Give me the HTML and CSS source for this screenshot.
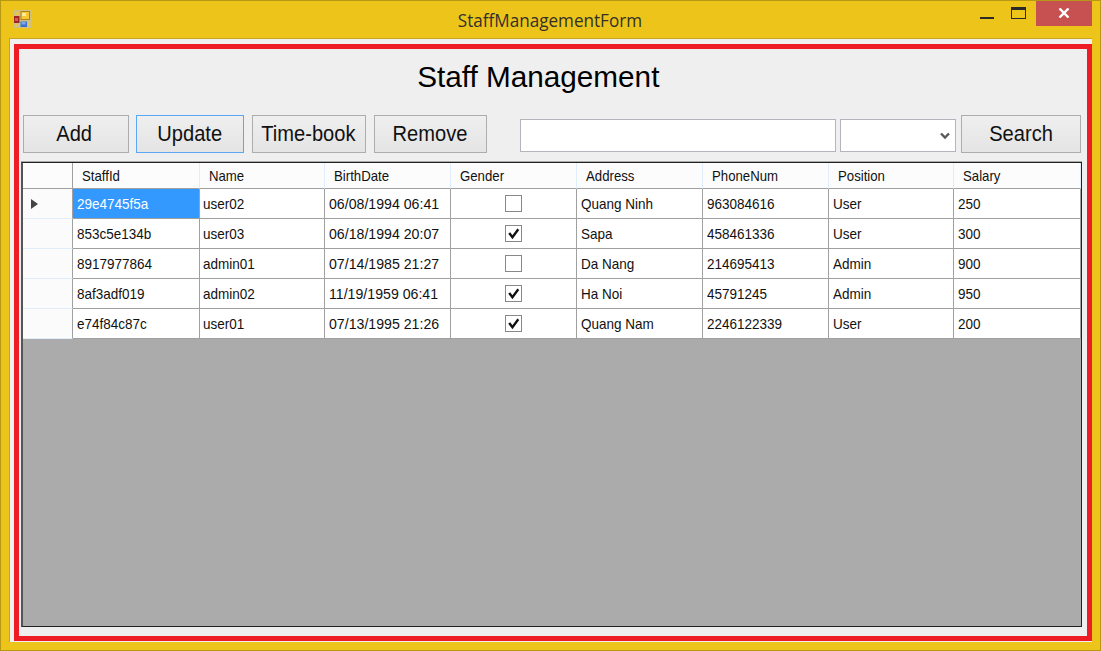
FILE: index.html
```html
<!DOCTYPE html>
<html lang="en">
<head>
<meta charset="utf-8">
<title>StaffManagementForm</title>
<link rel="stylesheet" href="styles.css">
</head>
<body>
<div class="window">
  <header class="titlebar">
    <svg class="app-icon" width="18" height="18" viewBox="0 0 18 18">
      <path fill="#cdbf86" d="M0 0h18v18H0z"/>
      <path fill="#e6c548" d="M2 2h4v3H2zM15 12h2v4h-2zM2 14h2v2H2z"/>
      <path fill="#b08316" d="M7.500 1H17v9H7.500z"/><path fill="#f8c832" d="M8.500 2H16v7H8.500z"/><path fill="#ffe99a" d="M9 3h4v3H9z"/>
      <path fill="#9f2525" d="M1 6h5.500v7H1z"/><path fill="#d55a55" d="M2 8h3v3H2z"/>
      <path fill="#3b70d2" d="M7.500 11.500H14V17H7.500z"/><path fill="#79a9f5" d="M8.500 12h4v2.500h-4z"/>
    </svg>
    <h1 class="title"><span>StaffManagementForm</span></h1>
    <div class="controls">
      <svg width="50" height="26" viewBox="0 0 50 26" shape-rendering="crispEdges">
        <path fill="#2b2a26" d="M0 16h14v2H0zM31 6h15v12H31z"/><path fill="#edc51a" d="M32 9h13v8H32z"/>
      </svg>
      <button class="close"><svg width="12" height="10" viewBox="0 0 12 10"><path d="M1.500.5l9 9M10.500.5l-9 9" stroke="#fff" stroke-width="2.400"/></svg></button>
    </div>
  </header>
  <main class="client">
    <section class="panel">
      <h2 class="heading"><span>Staff Management</span></h2>
      <div class="toolbar">
        <button class="btn add"><span>Add</span></button>
        <button class="btn update"><span>Update</span></button>
        <button class="btn timebook"><span>Time-book</span></button>
        <button class="btn remove"><span>Remove</span></button>
        <div class="field"></div>
        <div class="field combo"><svg width="10" height="8" viewBox="0 0 10 8"><path d="M1 1.500l4 4 4-4" fill="none" stroke="#55585c" stroke-width="2.400"/></svg></div>
        <button class="btn search"><span>Search</span></button>
      </div>
      <div class="grid">
        <div class="row head"><div></div><div><span>StaffId</span></div><div><span>Name</span></div><div><span>BirthDate</span></div><div><span>Gender</span></div><div><span>Address</span></div><div><span>PhoneNum</span></div><div><span>Position</span></div><div><span>Salary</span></div></div>
        <div class="row"><div class="rowhead"><i class="arrow"></i></div><div class="selected"><span>29e4745f5a</span></div><div class="name"><span>user02</span></div><div class="date"><span>06/08/1994 06:41</span></div><div class="check"><i class="box"></i></div><div><span>Quang Ninh</span></div><div><span>963084616</span></div><div><span>User</span></div><div><span>250</span></div></div>
        <div class="row"><div class="rowhead"></div><div><span>853c5e134b</span></div><div class="name"><span>user03</span></div><div class="date"><span>06/18/1994 20:07</span></div><div class="check"><i class="box"><svg viewBox="0 0 14 14"><path d="M3 6.500l3 4 5.500-7.500"/></svg></i></div><div><span>Sapa</span></div><div><span>458461336</span></div><div><span>User</span></div><div><span>300</span></div></div>
        <div class="row"><div class="rowhead"></div><div><span>8917977864</span></div><div class="name"><span>admin01</span></div><div class="date"><span>07/14/1985 21:27</span></div><div class="check"><i class="box"></i></div><div><span>Da Nang</span></div><div><span>214695413</span></div><div><span>Admin</span></div><div><span>900</span></div></div>
        <div class="row"><div class="rowhead"></div><div><span>8af3adf019</span></div><div class="name"><span>admin02</span></div><div class="date"><span>11/19/1959 06:41</span></div><div class="check"><i class="box"><svg viewBox="0 0 14 14"><path d="M3 6.500l3 4 5.500-7.500"/></svg></i></div><div><span>Ha Noi</span></div><div><span>45791245</span></div><div><span>Admin</span></div><div><span>950</span></div></div>
        <div class="row"><div class="rowhead"></div><div><span>e74f84c87c</span></div><div class="name"><span>user01</span></div><div class="date"><span>07/13/1995 21:26</span></div><div class="check"><i class="box"><svg viewBox="0 0 14 14"><path d="M3 6.500l3 4 5.500-7.500"/></svg></i></div><div><span>Quang Nam</span></div><div><span>2246122339</span></div><div><span>User</span></div><div><span>200</span></div></div>
      </div>
    </section>
  </main>
</div>
</body>
</html>
```
FILE: styles.css
```css
* { box-sizing: border-box; }
body { margin: 0; font-family: "Liberation Sans", Arial, sans-serif; color: #111; }
h1, h2 { margin: 0; font-weight: 400; }
button { font: inherit; padding: 0; }
svg { display: block; }

.window {
  width: 1101px;
  height: 651px;
  display: flex;
  flex-direction: column;
  padding: 0 8px 8px 9px;
  background: #edc51a;
  border: 1px solid #b79814;
}
.titlebar {
  height: 37px;
  flex: none;
  display: grid;
  grid-template-columns: 200px 1fr 200px;
}
.app-icon { margin: 9px 0 0 3px; }
.title {
  padding-right: 3px;
  text-align: center;
  font: 18px/39px "Open Sans", sans-serif;
  color: #33302a;
}
.title span { display: inline-block; transform: scaleX(.95); }
.controls { display: flex; justify-content: flex-end; }
.controls > svg { margin-right: 6px; }
.close {
  width: 56px;
  height: 25px;
  border: 0;
  background: #c75050;
  display: flex;
  align-items: center;
  justify-content: center;
  padding: 0 1px 2px 0;
}

.client {
  flex: 1;
  min-height: 0;
  border: solid #c7a51c;
  border-width: 1px 0 0 1px;
  margin-left: -1px;
  padding: 5px 0 1px 4px;
  background: #f0f0f0;
}
.panel {
  height: 100%;
  border: 5px solid #ee1c25;
  padding: 0 5px 9px 2px;
  display: flex;
  flex-direction: column;
  background: #efefef;
}
.heading {
  height: 66px;
  padding-right: 26px;
  text-align: center;
  font-size: 30px;
  line-height: 55px;
  color: #000;
}
.heading span { display: inline-block; transform: scaleX(.99); }
.toolbar { display: flex; height: 38px; margin: 0 0 9px 2px; align-items: center; }
.btn {
  height: 38px;
  flex: none;
  border: 1px solid #adadad;
  background: linear-gradient(#efefef, #e4e4e4);
  font-size: 21.5px;
  line-height: 37px;
  color: #111;
}
.btn span { display: inline-block; transform: scaleX(.935); }
.add { width: 106px; margin-right: 7px; padding-right: 3px; }
.update { width: 108px; margin-right: 8px; border-color: #5aa7f3; }
.timebook { width: 114px; margin-right: 8px; padding-right: 2px; white-space: nowrap; }
.remove { width: 113px; margin-right: 33px; }
.search { width: 120px; margin-left: 1px; }
.field { flex: none; width: 316px; height: 33px; margin: 2px 4px 0 0; background: #fff; border: 1px solid #b4b5bc; }
.combo { width: 116px; display: flex; justify-content: flex-end; align-items: center; padding: 2px 5px 0 0; }

.grid {
  flex: 1;
  min-height: 0;
  background: #ababab;
  border: 1px solid #222;
  border-left: 2px solid #555;
  box-shadow: 0 -1px #aaa;
}
.row {
  display: grid;
  grid-template-columns: 50px 127px 125px 126px 126px 126px 126px 125px 127px;
  height: 30px;
  background: #fff;
  font-size: 15px;
  line-height: 29px;
}
.row > div { height: 30px; padding-left: 4px; border: solid #a0a0a0; border-width: 0 1px 1px 0; white-space: nowrap; }
.row span { display: inline-block; transform: scaleX(.9); transform-origin: 0 50%; }
.row > .name { padding-left: 3px; }
.row > .date span { transform: scaleX(.943); }
.row.head { height: 26px; line-height: 26px; background: #fcfcfd; }
.row.head > div { height: 26px; padding-left: 9px; border-right-color: #e1edfa; }
.row.head span { transform: scaleX(.88); }
.row.head > div:first-child, .row > .rowhead { border-right-color: #a0a0a0; }
.row > .rowhead { background: #fbfbfc; border-bottom-color: #e1edfa; padding: 10px 0 0 8px; }
.selected { background: #3399ff; color: #fff; }
.arrow { display: block; border: solid transparent; border-width: 5.5px 0 5.5px 7px; border-left-color: #444; width: 0; }
.row > .check { display: flex; justify-content: center; align-items: center; padding: 0; }
.box { width: 17px; height: 17px; border: 1px solid #888; background: #fff; }
.box path { fill: none; stroke: #111; stroke-width: 2.2; }
```
